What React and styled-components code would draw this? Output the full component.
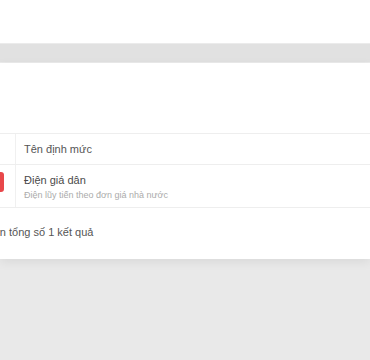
import React from 'react';
import styled, { createGlobalStyle } from 'styled-components';

const GlobalStyle = createGlobalStyle`
  html, body {
    margin: 0;
    padding: 0;
    background: #e9e9e9;
    font-family: 'Liberation Sans', Arial, sans-serif;
    overflow: hidden;
  }
`;

const Page = styled.div`
  display: flex;
  flex-direction: column;
  width: 370px;
  height: 360px;
  background: #e9e9e9;
`;

const TopBar = styled.div`
  height: 43px;
  background: #ffffff;
`;

const Band = styled.div`
  height: 18px;
  background: #e1e1e1;
  border-top: 1px solid #ebebeb;
  border-bottom: 1px solid #ebebeb;
`;

const Card = styled.div`
  background: #ffffff;
  height: 196px;
  padding-top: 70px;
  box-sizing: border-box;
  box-shadow: 0 3px 10px rgba(0, 0, 0, 0.07);
  overflow: hidden;
`;

const Table = styled.div`
  margin-left: -44px;
  border-top: 1px solid #eeeeee;
`;

const Row = styled.div`
  display: flex;
  height: ${p => p.$h}px;
  border-bottom: 1px solid #eeeeee;
  box-sizing: border-box;
`;

const ActionCell = styled.div`
  width: 60px;
  flex: none;
  display: flex;
  align-items: flex-start;
  justify-content: flex-end;
  padding: 7px 11px 0 0;
  box-sizing: border-box;
  border-right: 1px solid #f0f0f0;
`;

const RedButton = styled.div`
  width: 40px;
  height: 20px;
  border-radius: 3px;
  background: #e8474a;
`;

const Cell = styled.div`
  flex: 1;
  display: flex;
  flex-direction: column;
  justify-content: ${p => (p.$top ? 'flex-start' : 'center')};
  padding: ${p => (p.$top ? '8px' : '0')} 0 0 8px;
`;

const HeadText = styled.div`
  font-size: 11px;
  color: #555555;
`;

const Name = styled.div`
  font-size: 11px;
  color: #4a4a4a;
  line-height: 14px;
`;

const Sub = styled.div`
  font-size: 9px;
  color: #ababab;
  margin-top: 3px;
  line-height: 11px;
`;

const Footer = styled.div`
  display: flex;
  align-items: center;
  height: 47px;
  font-size: 11px;
  color: #555555;
  white-space: nowrap;
`;

const Prefix = styled.span`
  display: inline-block;
  width: 120px;
  margin-left: -114px;
  text-align: right;
`;

export default function App() {
  return (
    <Page>
      <GlobalStyle />
      <TopBar />
      <Band />
      <Card>
        <Table>
          <Row $h={31}>
            <ActionCell />
            <Cell>
              <HeadText>Tên định mức</HeadText>
            </Cell>
          </Row>
          <Row $h={43}>
            <ActionCell>
              <RedButton />
            </ActionCell>
            <Cell $top>
              <Name>Điện giá dân</Name>
              <Sub>Điện lũy tiến theo đơn giá nhà nước</Sub>
            </Cell>
          </Row>
        </Table>
        <Footer>
          <Prefix>Hiển thị 1 đến 1 trên</Prefix>&nbsp;tổng số 1 kết quả
        </Footer>
      </Card>
    </Page>
  );
}
